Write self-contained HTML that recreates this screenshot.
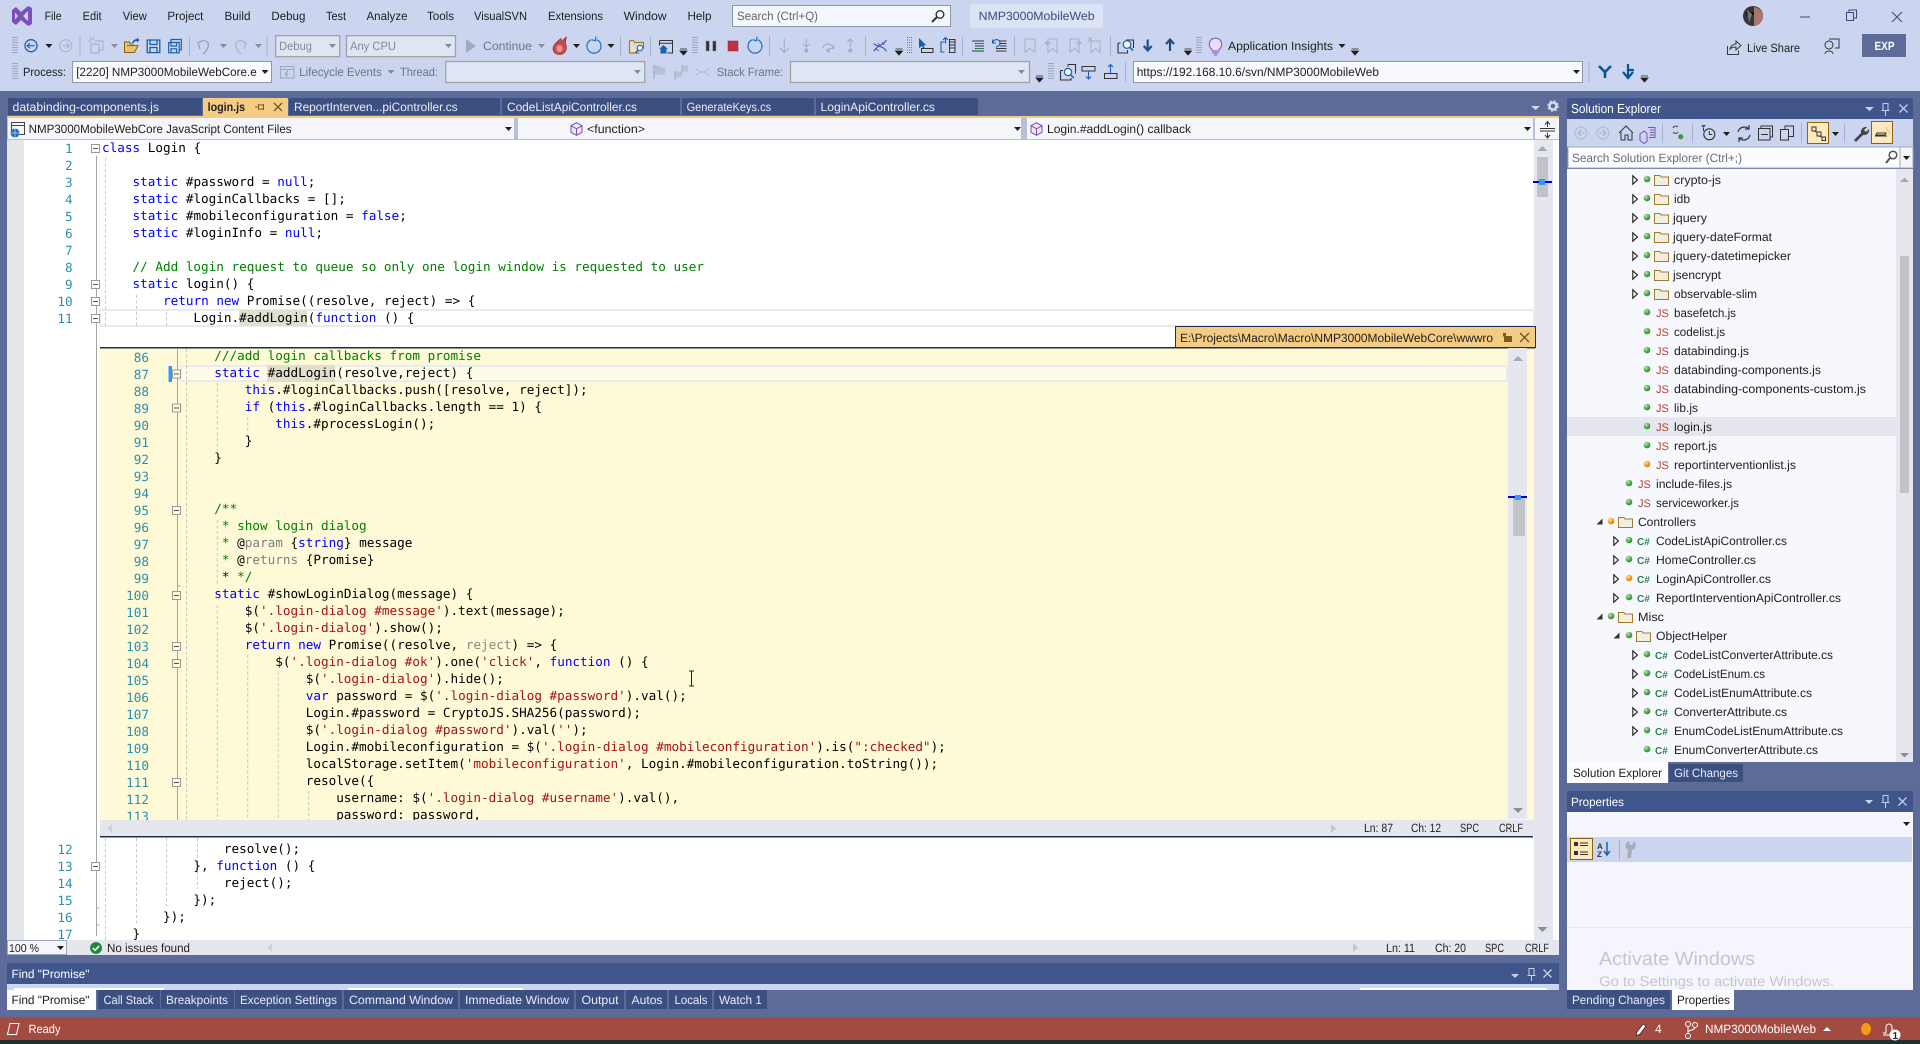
<!DOCTYPE html>
<html><head><meta charset="utf-8"><title>NMP3000MobileWeb</title>
<style>
html,body{margin:0;padding:0;background:#5d6b99;overflow:hidden;width:1920px;height:1044px}
svg{display:block;text-rendering:geometricPrecision}
text{font-family:"Liberation Sans",sans-serif;font-size:12px;fill:#1e1e1e;white-space:pre}
.w{fill:#fff}.gr{fill:#858a99}.lb{fill:#e8ecf8}
.m{font-family:"DejaVu Sans Mono","Liberation Mono",monospace;font-size:12.67px;fill:#000;white-space:pre}
.n{font-family:"DejaVu Sans Mono","Liberation Mono",monospace;font-size:12.67px;fill:#2b91af;text-anchor:end}
.k{fill:#0000ff}.s{fill:#a31515}.c{fill:#008000}.g{fill:#8a8a8a}.h{fill:#808080}.t{fill:#000}
.js{font-size:11px;fill:#b5432b}.cs{font-size:10px;font-weight:bold;fill:#2f7d4f}
</style></head><body>
<svg xmlns="http://www.w3.org/2000/svg" width="1920" height="1044" viewBox="0 0 1920 1044">
<defs>
<radialGradient id="gg" cx=".35" cy=".3" r=".8"><stop offset="0" stop-color="#b5e8a8"/><stop offset=".6" stop-color="#4ca64c"/><stop offset="1" stop-color="#2b7a2b"/></radialGradient>
<radialGradient id="og" cx=".35" cy=".3" r=".8"><stop offset="0" stop-color="#ffe39a"/><stop offset=".6" stop-color="#f09a10"/><stop offset="1" stop-color="#c87400"/></radialGradient>
<symbol id="d" width="8" height="8" overflow="visible"><circle cx="4" cy="4" r="3.3" fill="url(#gg)"/></symbol>
<symbol id="o" width="8" height="8" overflow="visible"><circle cx="4" cy="4" r="3.3" fill="url(#og)"/></symbol>
<symbol id="f" width="15" height="12" overflow="visible"><path d="M.5 1.5h5.5l1 1.5h7.5v8.5H.5z" fill="#f1efe4" stroke="#a07c28"/></symbol>
<symbol id="a" width="7" height="10" overflow="visible"><path d="M.8.8l4.6 4.2L.8 9.2z" fill="#fff" stroke="#1e1e1e" stroke-width="1.100"/></symbol>
<symbol id="e" width="7" height="7" overflow="visible"><path d="M6.500.5v6h-6z" fill="#333"/></symbol>
<symbol id="b" width="9" height="9" overflow="visible"><rect x=".5" y=".5" width="8" height="8" fill="#fff" stroke="#9a9a9a"/><path d="M2 4.500h5" stroke="#555"/></symbol>
<symbol id="by" width="9" height="9" overflow="visible"><rect x=".5" y=".5" width="8" height="8" fill="#fef9d6" stroke="#9a9a9a"/><path d="M2 4.500h5" stroke="#555"/></symbol>
<symbol id="dn" width="7" height="4" overflow="visible"><path d="M0 0h7l-3.500 4z" fill="#1e1e1e"/></symbol>
<symbol id="dg" width="7" height="4" overflow="visible"><path d="M0 0h7l-3.500 4z" fill="#858a99"/></symbol>
<symbol id="ov" width="7" height="6" overflow="visible"><path d="M0 0h7M0 2h7l-3.500 4z" stroke="#1e1e1e" stroke-width=".8" fill="#1e1e1e"/></symbol>
<symbol id="gp" width="6" height="17" overflow="visible"><path d="M1 0v17M3 0v17M5 0v17" stroke="#6b7390" stroke-width="1" stroke-dasharray="1 1.500"/></symbol>
<symbol id="cube" width="13" height="14" overflow="visible"><path d="M6.500.7l5.500 3v6.600l-5.500 3-5.500-3V3.700zM1 3.700l5.500 3 5.500-3M6.500 6.700v6.600" fill="#efe6f6" stroke="#7d4fb0"/></symbol>
<symbol id="xs" width="9" height="9" overflow="visible"><path d="M.5.5l8 8M8.500.5l-8 8" stroke="#c8d0ea" stroke-width="1.300"/></symbol>
<symbol id="pin" width="9" height="13" overflow="visible"><path d="M2 .5h5v7H2zM.5 7.500h8M4.500 7.500v5.500" fill="none" stroke="#c8d0ea"/></symbol>
<clipPath id="pk"><rect x="100" y="348" width="1407" height="472"/></clipPath>
<clipPath id="lo"><rect x="24" y="837" width="1510" height="103"/></clipPath>
<clipPath id="pt"><rect x="1180" y="328" width="313" height="18"/></clipPath>
<clipPath id="pr"><rect x="72" y="61" width="185" height="21"/></clipPath>
</defs>

<rect width="1920" height="1044" fill="#5d6b99"/>
<rect width="1920" height="91" fill="#ccd5f0"/>

<!-- logo + menu -->
<path d="M12 10l4-3 5 5 7-6 4 2v16l-4 2-7-6-5 5-4-3zM15 12.500v7l3-3.500zM28 11l-5 5 5 5z" fill="#7c50b8" fill-rule="evenodd"/>
<text x="44.600" y="20" textLength="17" lengthAdjust="spacingAndGlyphs">File</text>
<text x="82.600" y="20" textLength="19" lengthAdjust="spacingAndGlyphs">Edit</text>
<text x="122.800" y="20" textLength="24" lengthAdjust="spacingAndGlyphs">View</text>
<text x="167.400" y="20" textLength="36" lengthAdjust="spacingAndGlyphs">Project</text>
<text x="224.500" y="20" textLength="26" lengthAdjust="spacingAndGlyphs">Build</text>
<text x="271.400" y="20" textLength="34" lengthAdjust="spacingAndGlyphs">Debug</text>
<text x="326" y="20" textLength="20" lengthAdjust="spacingAndGlyphs">Test</text>
<text x="366.500" y="20" textLength="41" lengthAdjust="spacingAndGlyphs">Analyze</text>
<text x="427" y="20" textLength="27" lengthAdjust="spacingAndGlyphs">Tools</text>
<text x="474" y="20" textLength="53" lengthAdjust="spacingAndGlyphs">VisualSVN</text>
<text x="548" y="20" textLength="55" lengthAdjust="spacingAndGlyphs">Extensions</text>
<text x="623.600" y="20" textLength="43" lengthAdjust="spacingAndGlyphs">Window</text>
<text x="687.500" y="20" textLength="24" lengthAdjust="spacingAndGlyphs">Help</text>

<rect x="732.500" y="5.500" width="218" height="21" fill="#f5f7fe" stroke="#8f96ad"/>
<text x="737" y="20" textLength="81" lengthAdjust="spacingAndGlyphs" style="fill:#666">Search (Ctrl+Q)</text>
<path d="M932 22l5-5" stroke="#333" stroke-width="2"/><circle cx="940" cy="14.500" r="3.800" fill="none" stroke="#333" stroke-width="1.400"/>
<rect x="970" y="4" width="133" height="24" fill="#dde3f7"/>
<text x="978.600" y="20" textLength="116" lengthAdjust="spacingAndGlyphs" style="fill:#3d4a78">NMP3000MobileWeb</text>

<!-- window controls -->
<circle cx="1753" cy="16" r="10" fill="#3a3336"/><path d="M1746 12h14v3h-14z" fill="#111"/><path d="M1754 7a10 10 0 0 1 9 9 10 10 0 0 1-9 10z" fill="#a9776a"/><path d="M1747 10l5 4-3 9z" fill="#6c7a86"/>
<path d="M1800 17h10" stroke="#3d4a78" stroke-width="1"/>
<path d="M1846.500 12.500h7v8h-7zM1849 12.500v-2.500h7.500v8h-3" fill="none" stroke="#3d4a78"/>
<path d="M1892 12l10 10M1902 12l-10 10" stroke="#3d4a78"/>
<path d="M1727.500 46v8.500h11v-4M1730 49c1-4 4-5 6-5v-3l5 4.500-5 4.500v-3c-2 0-4 0-6 2z" fill="none" stroke="#3a3a3a"/>
<text x="1747" y="52" textLength="53" lengthAdjust="spacingAndGlyphs">Live Share</text>
<circle cx="1829" cy="45" r="4" fill="none" stroke="#333"/><path d="M1825 54c0-4 8-4 8 0M1829 39h10v9h-4" fill="none" stroke="#333"/>
<rect x="1862" y="34" width="44" height="23" fill="#5d6b99"/>
<text x="1874.500" y="50" style="fill:#fff;font-weight:bold" textLength="20" lengthAdjust="spacingAndGlyphs">EXP</text>

<!-- toolbar row 1 -->
<use href="#gp" x="12" y="37"/>
<circle cx="31" cy="45.700" r="6" fill="none" stroke="#1e5faa" stroke-width="1.300"/><path d="M34.500 45.700h-7M30 43l-2.800 2.700 2.800 2.700" fill="none" stroke="#1e5faa" stroke-width="1.100"/>
<use href="#dn" x="45.500" y="44"/>
<circle cx="65.700" cy="45.700" r="6" fill="none" stroke="#a9afc2"/><path d="M62 45.700h7M66.500 43l2.800 2.700-2.800 2.700" fill="none" stroke="#a9afc2"/>
<path d="M80 36v20M189.500 36v20M267 36v20M620.500 36v20M650.500 36v20M769.500 36v20M865.500 36v20M962.500 36v20M1014.500 36v20M1110.500 36v20" stroke="#a8b1cc"/>
<path d="M91 44h8v9h-8zM95 41h8v9h-4M90 37l1 3M94 38l-2 2M88 41h3" fill="none" stroke="#a5abc0"/><use href="#dg" x="111" y="44"/>
<path d="M124.500 45v7.500h10l3.500-7h-11M124.500 45v-3h5l1 2h3" fill="#e3c16f" stroke="#8c6410"/><path d="M132 43c1-3 3-4 5-4v-1.500l2.500 2.500-2.500 2.500v-1.500c-2 0-3 1-3.500 2z" fill="#1d62ac"/>
<path d="M147.200 40h12.600v12.600h-12.600zM150 40v4.500h7V40M150 52.600v-5.100h7v5.100" fill="none" stroke="#1a5fa8" stroke-width="1.300"/>
<path d="M168.700 42.500h10.500v10.300h-10.500zM171 42.500v3.500h5.500v-3.500M171 52.800v-4h5.500v4M171 42v-2.500h10.300v10.300h-2" fill="none" stroke="#1a5fa8" stroke-width="1.200"/>
<path d="M200 49l-2-6 4-2c5-2 9 3 4 10l-3 3" fill="none" stroke="#9aa0b5" stroke-width="1.300"/><use href="#dg" x="220" y="44"/>
<path d="M244 49l2-6-4-2c-5-2-9 3-4 10l3 3" fill="none" stroke="#b0b5c6" stroke-width="1.300"/><use href="#dg" x="255" y="44"/>
<rect x="275.700" y="35.700" width="64" height="21" fill="#dfe6f3" stroke="#a0a2a5" stroke-width="1.300"/><text x="279" y="50" class="gr" textLength="33" lengthAdjust="spacingAndGlyphs">Debug</text><use href="#dg" x="329" y="44"/>
<rect x="346.500" y="35.700" width="109" height="21" fill="#dfe6f3" stroke="#a0a2a5" stroke-width="1.300"/><text x="350" y="50" class="gr" textLength="46" lengthAdjust="spacingAndGlyphs">Any CPU</text><use href="#dg" x="445" y="44"/>
<path d="M466 39l10 7-10 7z" fill="#a3a9bc"/>
<text x="483" y="50" style="fill:#6e7386" textLength="49" lengthAdjust="spacingAndGlyphs">Continue</text><use href="#dg" x="538" y="44"/>
<path d="M566.500 37c-3 1.500-3.500 3-3.500 4.500-1.500-1-2-2-2-3-4 3-8 7-8 10 0 4 3 6 6.500 6 4 0 7-3 7-7 0-2-1-3-1-5 0-2 .5-4 1-5.500z" fill="#cc4a4a" stroke="#8d2320" stroke-width=".6"/><ellipse cx="559.500" cy="48.500" rx="3" ry="3.500" fill="#ee9a9a"/><use href="#dn" x="573" y="44"/>
<path d="M591 39.800a7 7 0 1 0 6 0M596 36.500l-.5 4.200-4-1" fill="none" stroke="#1e6fc0" stroke-width="1.200"/><use href="#dn" x="607.500" y="44"/>
<path d="M629.500 40.500v12.500h10M629.500 40.500h4l1 2h9v6" fill="#e8e0c8" stroke="#a07c28" stroke-width="1.200"/><circle cx="640" cy="48" r="2.800" fill="#f4f6fc" stroke="#1d62ac" stroke-width="1.100"/><path d="M638 50l-2.500 2.800" stroke="#1d62ac" stroke-width="1.400"/>
<path d="M659.500 40.500h13v12.500h-5M659.500 43.200h13M659.500 40.500v5" fill="none" stroke="#333"/><path d="M663.500 45l4.300 4h-1.300v4.500h-6V49h-1.300z" fill="#1d62ac"/>
<use href="#ov" x="680" y="49"/><use href="#gp" x="692" y="37"/>
<path d="M706 41h3.300v10H706zM712.700 41h3.300v10h-3.300z" fill="#333" stroke="#8b8f9e" stroke-width=".5"/>
<rect x="728" y="41" width="10" height="10" fill="#c23045" stroke="#8a2a3a" stroke-width=".5"/>
<path d="M752 39.800a7 7 0 1 0 6 0M757 36.500l-.5 4.200-4-1" fill="none" stroke="#1e6fc0" stroke-width="1.200"/>
<path d="M784.300 39v13.500M779.500 47.500l4.800 5 4.800-5" fill="none" stroke="#a8aec2" stroke-width="1.200"/>
<circle cx="806.300" cy="50.500" r="2" fill="#a8aec2"/><path d="M806.300 39v8M803.300 44l3 3 3-3" fill="none" stroke="#a8aec2" stroke-width="1.200"/>
<circle cx="828.300" cy="50.500" r="2" fill="#a8aec2"/><path d="M822.500 48.500c1-6 9-6 11 0M833.500 44.500v4h-4" fill="none" stroke="#a8aec2" stroke-width="1.200"/>
<circle cx="850.300" cy="50.500" r="2" fill="#a8aec2"/><path d="M850.300 47.500v-8.500M847.300 42l3-3 3 3" fill="none" stroke="#a8aec2" stroke-width="1.200"/>
<path d="M873.500 51c3-1 2-4 7-6s4-3 6-5M873.500 44c2 0 3 2 6 2.500s5 1.500 7 5" fill="none" stroke="#2f5fa8" stroke-width="1.200"/><path d="M875 48l4 3M878 43l3 4M882 42l2 3" stroke="#7c50b8"/>
<use href="#ov" x="895.500" y="49"/><use href="#gp" x="906.500" y="37"/>
<path d="M919 38l7 7-2.500.5 1.500 3-1.500.5-1.500-3-3 2z" fill="#1c5ca0"/><rect x="921.500" y="48.500" width="11.500" height="4" fill="none" stroke="#333"/>
<path d="M944.500 42h-3.500v10h3.500M945.500 37.500v6M943 40l2.500-2.500 2.500 2.500" fill="none" stroke="#1c5ca0" stroke-width="1.100"/><path d="M949.500 39.500h5.500v13h-5.500z" fill="none" stroke="#333"/><path d="M950 42h5M950 45h5M950 48h5" stroke="#333"/>
<path d="M972 41h12M975 43.500h9M975 46h9M975 48.500h9M972 51h12" stroke="#333"/><path d="M976 43.500h8M976 48.500h8" stroke="#2c7a4f"/>
<path d="M993 43a3.500 3.500 0 1 1 4 3.500l-1 1M992.500 39.500v3.500h3.500" fill="none" stroke="#1c5ca0" stroke-width="1.100"/><path d="M999 41h7.500M1000 43.500h6.500M1000 46h6.500M996 48.500h10.500M996 51h10.500" stroke="#333"/>
<path d="M1025 39h10v13.500l-5-4-5 4z" fill="none" stroke="#a8aec2"/>
<path d="M1048 39h9v13.500l-4.500-4-4.500 4zM1045 43l3-2.500M1045 43l3 2.500M1045 43h6" fill="none" stroke="#a8aec2"/>
<path d="M1070 39h9v13.500l-4.500-4-4.500 4zM1081 43l-3-2.500M1081 43l-3 2.500M1081 43h-6" fill="none" stroke="#a8aec2"/>
<path d="M1091 41h9v11.500l-4.500-4-4.500 4zM1088 37.500l4 4M1092 37.500l-4 4" fill="none" stroke="#a8aec2"/>
<path d="M1118 43v10h9.500v-3M1118 43h2.500M1126 40h7.500v8" fill="none" stroke="#333" stroke-width="1.100"/><circle cx="1127" cy="44.500" r="3.800" fill="#f4f6fc" stroke="#1d62ac" stroke-width="1.200"/><path d="M1129.800 47.300l3.200 3.200" stroke="#1d62ac" stroke-width="1.600"/>
<path d="M1147.700 39.500v10M1143.700 46l4 4.500 4-4.500" fill="none" stroke="#1c4f8a" stroke-width="2.200"/>
<path d="M1170 51v-11M1166 44l4-4.500 4 4.500" fill="none" stroke="#1c4f8a" stroke-width="2.200"/>
<use href="#ov" x="1184.500" y="49"/><use href="#gp" x="1196" y="37"/>
<path d="M1211.500 49a6.200 6.200 0 1 1 8 0l-1 2h-6zM1212.500 53h6M1214 55h3" fill="#e8def4" stroke="#7c50b8"/>
<text x="1228" y="50" textLength="105" lengthAdjust="spacingAndGlyphs">Application Insights</text>
<use href="#dn" x="1338.500" y="44"/><use href="#ov" x="1351.500" y="49"/>

<!-- toolbar row 2 -->
<use href="#gp" x="12" y="63"/>
<text x="23" y="76" textLength="43" lengthAdjust="spacingAndGlyphs">Process:</text>
<rect x="72.500" y="61.500" width="199" height="21" fill="#f8f9fe" stroke="#8f96ad"/>
<text x="76.300" y="76" clip-path="url(#pr)" textLength="180.400" lengthAdjust="spacingAndGlyphs">[2220] NMP3000MobileWebCore.e</text><use href="#dn" x="261.500" y="70"/>
<path d="M280.500 66.500h13.500v11.500h-13.500zM280.500 69.500h13.500" fill="none" stroke="#a1a7bb"/><path d="M288 70.500l-3 3.500h2.500l-1.500 3" fill="none" stroke="#9aa0b5"/>
<text x="299.300" y="76" style="fill:#6e7386" textLength="82.500" lengthAdjust="spacingAndGlyphs">Lifecycle Events</text><use href="#dg" x="387.500" y="70"/>
<text x="400" y="76" style="fill:#6e7386" textLength="38" lengthAdjust="spacingAndGlyphs">Thread:</text>
<rect x="445.700" y="61.500" width="199" height="21" fill="#dfe6f3" stroke="#a0a2a5" stroke-width="1.300"/><use href="#dg" x="634" y="70"/>
<path d="M654 65v14" stroke="#a8aec2" stroke-width="1.300"/><path d="M654.500 65.500h5v2h5.500v7h-10.500z" fill="#b9bfd4"/>
<path d="M675 71v9M682 65v8" stroke="#a8aec2" stroke-width="1.200"/><path d="M675.500 71.500h6v6h-6zM682.500 65.500h5.500v6h-5.500z" fill="#b9bfd4"/>
<path d="M696 69l5 3 3 0 5-3M696 75l5-3M709 75l-5-3" fill="none" stroke="#b0b6ca"/>
<text x="716.700" y="76" style="fill:#6e7386" textLength="66.600" lengthAdjust="spacingAndGlyphs">Stack Frame:</text>
<rect x="790.500" y="61.500" width="239" height="21" fill="#dfe6f3" stroke="#a0a2a5" stroke-width="1.300"/><use href="#dg" x="1018" y="70"/>
<use href="#ov" x="1036" y="76"/><use href="#gp" x="1048" y="63"/>
<path d="M1060.500 70.500v9.500h10.500v-2M1060.500 70.500h2.500M1068 64.500h7.500v9M1068 64.500v2" fill="none" stroke="#333" stroke-width="1.100"/><circle cx="1068" cy="72" r="3.600" fill="#f4f6fc" stroke="#1d62ac" stroke-width="1.200"/><path d="M1070.800 75l3 3" stroke="#1d62ac" stroke-width="1.500"/>
<path d="M1082 66.500h13v4.500h-13z" fill="none" stroke="#333"/><path d="M1088.500 71v8M1086 76.500l2.500 2.500 2.500-2.500" fill="none" stroke="#1d62ac" stroke-width="1.100"/>
<path d="M1104.500 73.500h12.500v5h-12.500z" fill="none" stroke="#333"/><path d="M1110.500 73v-8.500M1108 67l2.500-2.500 2.500 2.500" fill="none" stroke="#1d62ac" stroke-width="1.100"/>
<path d="M1125.500 62v20" stroke="#a8b1cc"/>
<rect x="1133.500" y="61.500" width="449" height="21" fill="#f8f9fe" stroke="#8f96ad"/>
<text x="1136.700" y="76" textLength="242.300" lengthAdjust="spacingAndGlyphs">https://192.168.10.6/svn/NMP3000MobileWeb</text><use href="#dn" x="1573" y="70"/>
<path d="M1589 62v20" stroke="#a8b1cc"/>
<path d="M1599 66l6 6 6-6M1605 72v6" fill="none" stroke="#0a5596" stroke-width="2.600"/>
<path d="M1628 64v13M1623 72l5 6 5-6M1628 70h6" fill="none" stroke="#0a5596" stroke-width="2.200"/>
<use href="#ov" x="1641" y="76"/>

<!-- document tabs -->
<rect x="8" y="98" width="194" height="17" fill="#3b4f81"/>
<rect x="203" y="98" width="85" height="18" fill="#f5cc84"/>
<rect x="289" y="98" width="211" height="17" fill="#3b4f81"/>
<rect x="502" y="98" width="178" height="17" fill="#3b4f81"/>
<rect x="682" y="98" width="132" height="17" fill="#3b4f81"/>
<rect x="816" y="98" width="162" height="17" fill="#3b4f81"/>
<text x="12.500" y="111" class="lb" textLength="146.500" lengthAdjust="spacingAndGlyphs">databinding-components.js</text>
<text x="207.600" y="111" style="font-weight:bold;fill:#222" textLength="37.500" lengthAdjust="spacingAndGlyphs">login.js</text>
<path d="M255 107h3M258.500 104v6M258.500 105h5v4h-5M263.500 104v6" fill="none" stroke="#7b5a1c"/>
<path d="M274 103l8 8M282 103l-8 8" stroke="#5e4820" stroke-width="1.200"/>
<text x="294" y="111" class="lb" textLength="163.600" lengthAdjust="spacingAndGlyphs">ReportInterven...piController.cs</text>
<text x="507" y="111" class="lb" textLength="130" lengthAdjust="spacingAndGlyphs">CodeListApiController.cs</text>
<text x="686.600" y="111" class="lb" textLength="84.500" lengthAdjust="spacingAndGlyphs">GenerateKeys.cs</text>
<text x="820.500" y="111" class="lb" textLength="114.500" lengthAdjust="spacingAndGlyphs">LoginApiController.cs</text>
<path d="M1531 106h9l-4.500 4z" fill="#d4daf0"/>
<circle cx="1553" cy="106" r="3.500" fill="none" stroke="#d4daf0" stroke-width="2.400"/><circle cx="1553" cy="106" r="5" fill="none" stroke="#d4daf0" stroke-width="1.500" stroke-dasharray="2 2"/>
<rect x="7" y="116" width="1552" height="2" fill="#f5cc84"/>

<!-- nav bar -->
<rect x="7" y="118" width="1552" height="22" fill="#b6bed8"/>
<rect x="8" y="118" width="506" height="21" fill="#f5f6fb"/>
<rect x="518" y="118" width="503" height="21" fill="#f5f6fb"/>
<rect x="1027" y="118" width="506" height="21" fill="#f5f6fb"/>
<rect x="1535" y="118" width="24" height="21" fill="#f5f6fb"/>
<path d="M11.500 122.500h13v3h-13zM11.500 125.500v6M24.500 125.500v9h-5" fill="none" stroke="#444"/><circle cx="15" cy="133" r="4.500" fill="#1f6bbf"/><path d="M10.500 133h9M15 128.500v9" stroke="#bcd8f5" stroke-width=".7"/>
<text x="28.600" y="133" textLength="263" lengthAdjust="spacingAndGlyphs">NMP3000MobileWebCore JavaScript Content Files</text>
<use href="#dn" x="505" y="127"/>
<use href="#cube" x="570" y="122"/>
<text x="587" y="133" textLength="58" lengthAdjust="spacingAndGlyphs">&lt;function&gt;</text>
<use href="#dn" x="1014" y="127"/>
<use href="#cube" x="1030" y="122"/>
<text x="1047" y="133" textLength="144" lengthAdjust="spacingAndGlyphs">Login.#addLogin() callback</text>
<use href="#dn" x="1524" y="127"/>
<path d="M1540 128.500h15M1540 131h15M1547.500 122v5M1545 124.500l2.500-3 2.500 3M1547.500 132.500v5M1545 135l2.500 3 2.500-3" fill="none" stroke="#333"/>

<!-- editor area -->
<rect x="7" y="140" width="17" height="800" fill="#e6e7e8"/>
<rect x="24" y="140" width="1510" height="800" fill="#fff"/>
<rect x="1534" y="140" width="19" height="800" fill="#e6e7ee"/>
<rect x="1553" y="140" width="6" height="800" fill="#fff"/>
<path d="M1537.500 151l5-5 5 5z" fill="#a5a9b5"/>
<rect x="1537" y="157" width="11" height="40" fill="#c2c3c9"/>
<rect x="1533" y="181" width="19" height="2" fill="#0000d0"/><rect x="1539" y="179" width="6" height="6" fill="#3399ff"/>
<path d="M1537.500 927l5 5 5-5z" fill="#8a8d99"/>

<rect x="100" y="310" width="1434" height="16" fill="#fff" stroke="#eaeaf2" stroke-width="2"/>
<path d="M96.500 156v780M96.500 908h3M96.500 925h3" stroke="#a5a5a5" fill="none"/>
<g stroke="#c8c8c8" stroke-dasharray="3 2.500"><path d="M105.500 158v168M136.500 295v31M166.500 312v14"/><path d="M105.500 838v102M136.500 838v85M166.500 838v68M197.500 838v51"/></g>

<text class="n" x="72.600" y="153">1</text><text class="n" x="72.600" y="170">2</text><text class="n" x="72.600" y="187">3</text><text class="n" x="72.600" y="204">4</text><text class="n" x="72.600" y="221">5</text><text class="n" x="72.600" y="238">6</text><text class="n" x="72.600" y="255">7</text><text class="n" x="72.600" y="272">8</text><text class="n" x="72.600" y="289">9</text><text class="n" x="72.600" y="306">10</text><text class="n" x="72.600" y="323">11</text>
<use href="#b" x="91" y="144"/><use href="#b" x="91" y="280"/><use href="#b" x="91" y="297"/><use href="#b" x="91" y="314"/>
<rect x="239" y="310" width="68" height="16" fill="#dfe1d2"/>

<text class="m" x="102" y="152"><tspan class="k">class</tspan> <tspan fill="#000">Login</tspan> {</text>
<text class="m" x="102" y="186">    <tspan class="k">static</tspan> #password = <tspan class="k">null</tspan>;</text>
<text class="m" x="102" y="203">    <tspan class="k">static</tspan> #loginCallbacks = [];</text>
<text class="m" x="102" y="220">    <tspan class="k">static</tspan> #mobileconfiguration = <tspan class="k">false</tspan>;</text>
<text class="m" x="102" y="237">    <tspan class="k">static</tspan> #loginInfo = <tspan class="k">null</tspan>;</text>
<text class="m c" x="102" y="271">    // Add login request to queue so only one login window is requested to user</text>
<text class="m" x="102" y="288">    <tspan class="k">static</tspan> login() {</text>
<text class="m" x="102" y="305">        <tspan class="k">return</tspan> <tspan class="k">new</tspan> Promise((resolve, reject) =&gt; {</text>
<text class="m" x="102" y="322">            Login.#addLogin(<tspan class="k">function</tspan> () {</text>

<!-- peek -->
<rect x="1175.500" y="326.500" width="360" height="21" fill="#f5cc84" stroke="#1f2d50"/>
<text x="1180" y="342" clip-path="url(#pt)" textLength="323" lengthAdjust="spacingAndGlyphs">E:\Projects\Macro\Macro\NMP3000MobileWebCore\wwwroot</text>
<path d="M1503 333h3v3h6v6h-8v-5l-1-1z" fill="#7d5a1e"/>
<path d="M1520 333l9 9M1529 333l-9 9" stroke="#6e5020" stroke-width="1.300"/>
<rect x="100" y="347" width="1434" height="473" fill="#fef9d6"/>
<rect x="100" y="347" width="1435" height="1.500" fill="#1f2d50"/>
<rect x="181" y="366" width="1326" height="15" fill="#fefbe8" stroke="#eaeaf2" stroke-width="2"/>
<rect x="267" y="365" width="68" height="17" fill="#e0dfcc"/>
<rect x="168.500" y="366" width="3.500" height="16" fill="#3399ff"/>
<path d="M177.500 349v471M177.500 586h3" stroke="#a5a5a5" fill="none"/>
<g stroke="#c9c7b2" stroke-dasharray="3 2.500"><path d="M186.500 349v471M217.300 383v68M217.300 520v66M217.300 605v215M247.700 417v17M247.700 655v165M278.300 672v148M308.700 791v29"/></g>
<g clip-path="url(#pk)">
<text class="n" x="149" y="362">86</text><text class="n" x="149" y="379">87</text><text class="n" x="149" y="396">88</text><text class="n" x="149" y="413">89</text><text class="n" x="149" y="430">90</text><text class="n" x="149" y="447">91</text><text class="n" x="149" y="464">92</text><text class="n" x="149" y="481">93</text><text class="n" x="149" y="498">94</text><text class="n" x="149" y="515">95</text><text class="n" x="149" y="532">96</text><text class="n" x="149" y="549">97</text><text class="n" x="149" y="566">98</text><text class="n" x="149" y="583">99</text><text class="n" x="149" y="600">100</text><text class="n" x="149" y="617">101</text><text class="n" x="149" y="634">102</text><text class="n" x="149" y="651">103</text><text class="n" x="149" y="668">104</text><text class="n" x="149" y="685">105</text><text class="n" x="149" y="702">106</text><text class="n" x="149" y="719">107</text><text class="n" x="149" y="736">108</text><text class="n" x="149" y="753">109</text><text class="n" x="149" y="770">110</text><text class="n" x="149" y="787">111</text><text class="n" x="149" y="804">112</text><text class="n" x="149" y="821">113</text>
<use href="#by" x="172" y="369.500"/><use href="#by" x="172" y="403.500"/><use href="#by" x="172" y="506"/><use href="#by" x="172" y="591"/><use href="#by" x="172" y="642"/><use href="#by" x="172" y="659"/><use href="#by" x="172" y="778"/>
<text class="m c" x="183.800" y="360">    ///add login callbacks from promise</text>
<text class="m" x="183.800" y="377">    <tspan class="k">static</tspan> #addLogin(resolve,reject) {</text>
<text class="m" x="183.800" y="394">        <tspan class="k">this</tspan>.#loginCallbacks.push([resolve, reject]);</text>
<text class="m" x="183.800" y="411">        <tspan class="k">if</tspan> (<tspan class="k">this</tspan>.#loginCallbacks.length == 1) {</text>
<text class="m" x="183.800" y="428">            <tspan class="k">this</tspan>.#processLogin();</text>
<text class="m" x="183.800" y="445">        }</text>
<text class="m" x="183.800" y="462">    }</text>
<text class="m c" x="183.800" y="513">    /**</text>
<text class="m c" x="183.800" y="530">     * show login dialog</text>
<text class="m c" x="183.800" y="547">     * <tspan class="t">@</tspan><tspan class="h">param</tspan> <tspan class="t">{</tspan><tspan class="k">string</tspan><tspan class="t">} message</tspan></text>
<text class="m c" x="183.800" y="564">     * <tspan class="t">@</tspan><tspan class="h">returns</tspan> <tspan class="t">{Promise}</tspan></text>
<text class="m c" x="183.800" y="581">     <tspan class="t">*</tspan> */</text>
<text class="m" x="183.800" y="598">    <tspan class="k">static</tspan> #showLoginDialog(message) {</text>
<text class="m" x="183.800" y="615">        $(<tspan class="s">'.login-dialog #message'</tspan>).text(message);</text>
<text class="m" x="183.800" y="632">        $(<tspan class="s">'.login-dialog'</tspan>).show();</text>
<text class="m" x="183.800" y="649">        <tspan class="k">return</tspan> <tspan class="k">new</tspan> Promise((resolve, <tspan class="g">reject</tspan>) =&gt; {</text>
<text class="m" x="183.800" y="666">            $(<tspan class="s">'.login-dialog #ok'</tspan>).one(<tspan class="s">'click'</tspan>, <tspan class="k">function</tspan> () {</text>
<text class="m" x="183.800" y="683">                $(<tspan class="s">'.login-dialog'</tspan>).hide();</text>
<text class="m" x="183.800" y="700">                <tspan class="k">var</tspan> password = $(<tspan class="s">'.login-dialog #password'</tspan>).val();</text>
<text class="m" x="183.800" y="717">                Login.#password = CryptoJS.SHA256(password);</text>
<text class="m" x="183.800" y="734">                $(<tspan class="s">'.login-dialog #password'</tspan>).val(<tspan class="s">''</tspan>);</text>
<text class="m" x="183.800" y="751">                Login.#mobileconfiguration = $(<tspan class="s">'.login-dialog #mobileconfiguration'</tspan>).is(<tspan class="s">":checked"</tspan>);</text>
<text class="m" x="183.800" y="768">                localStorage.setItem(<tspan class="s">'mobileconfiguration'</tspan>, Login.#mobileconfiguration.toString());</text>
<text class="m" x="183.800" y="785">                resolve({</text>
<text class="m" x="183.800" y="802">                    username: $(<tspan class="s">'.login-dialog #username'</tspan>).val(),</text>
<text class="m" x="183.800" y="819">                    password: password,</text>
</g>
<!-- peek scrollbar -->
<rect x="1508" y="348" width="19" height="471" fill="#e6e7ee"/>
<path d="M1513 361l5-5 5 5z" fill="#a5a9b5"/>
<rect x="1513" y="496" width="12" height="40" fill="#c2c3c9"/>
<rect x="1508" y="496" width="19" height="2" fill="#0000d0"/><rect x="1515" y="495" width="6" height="5" fill="#3399ff"/>
<path d="M1513 808l5 5 5-5z" fill="#8a8d99"/>
<rect x="100" y="820" width="1434" height="16" fill="#e6e7ee"/>
<path d="M112 824l-5 4.500 5 4.500z" fill="#d0d1d8"/><path d="M1331 824l5 4.500-5 4.500z" fill="#c4c5cd"/>
<text x="1364" y="832" textLength="29" lengthAdjust="spacingAndGlyphs">Ln: 87</text><text x="1411" y="832" textLength="30" lengthAdjust="spacingAndGlyphs">Ch: 12</text><text x="1460" y="832" textLength="19" lengthAdjust="spacingAndGlyphs">SPC</text><text x="1499" y="832" textLength="24" lengthAdjust="spacingAndGlyphs">CRLF</text>
<rect x="100" y="836" width="1433" height="1.500" fill="#1f2d50"/>

<g clip-path="url(#lo)">
<text class="n" x="72.600" y="854">12</text><text class="n" x="72.600" y="871">13</text><text class="n" x="72.600" y="888">14</text><text class="n" x="72.600" y="905">15</text><text class="n" x="72.600" y="922">16</text><text class="n" x="72.600" y="939">17</text>
<use href="#b" x="91" y="862"/>
<text class="m" x="102" y="853">                resolve();</text>
<text class="m" x="102" y="870">            }, <tspan class="k">function</tspan> () {</text>
<text class="m" x="102" y="887">                reject();</text>
<text class="m" x="102" y="904">            });</text>
<text class="m" x="102" y="921">        });</text>
<text class="m" x="102" y="938">    }</text>
</g>

<!-- editor status -->
<rect x="7" y="940" width="1552" height="15" fill="#e6e7ee"/>
<rect x="7.500" y="940.500" width="59" height="14" fill="#f5f6fb" stroke="#a1a8bd"/>
<text x="9" y="952" style="font-size:11.500px" textLength="30" lengthAdjust="spacingAndGlyphs">100 %</text><use href="#dn" x="57" y="946"/>
<circle cx="96" cy="948" r="6" fill="#1e8a3b"/><path d="M92.800 948l2.300 2.300 4-4.300" fill="none" stroke="#fff" stroke-width="1.500"/>
<text x="107" y="952" textLength="83" lengthAdjust="spacingAndGlyphs">No issues found</text>
<path d="M272 943l-5 4.500 5 4.500z" fill="#d0d1d8"/><path d="M1353 943l5 4.500-5 4.500z" fill="#c4c5cd"/>
<text x="1386" y="952" textLength="29" lengthAdjust="spacingAndGlyphs">Ln: 11</text><text x="1435" y="952" textLength="31" lengthAdjust="spacingAndGlyphs">Ch: 20</text><text x="1485" y="952" textLength="19" lengthAdjust="spacingAndGlyphs">SPC</text><text x="1525" y="952" textLength="24" lengthAdjust="spacingAndGlyphs">CRLF</text>

<!-- find panel -->
<rect x="7" y="963" width="1552" height="21" fill="#3f558c"/>
<text x="11.500" y="978" class="w" textLength="78" lengthAdjust="spacingAndGlyphs">Find "Promise"</text>
<path d="M1511 974h8l-4 4z" fill="#c8d0ea"/><use href="#pin" x="1527" y="968"/><use href="#xs" x="1543" y="969"/>
<rect x="7" y="984" width="1552" height="6" fill="#ccd5f0"/>
<rect x="14" y="988" width="150" height="2" fill="#fff"/><rect x="348" y="988" width="175" height="2" fill="#fff"/><rect x="1360" y="988" width="187" height="2" fill="#fff"/>
<rect x="7" y="990" width="89" height="20" fill="#fdfdff"/>
<text x="11.500" y="1004" textLength="78" lengthAdjust="spacingAndGlyphs">Find "Promise"</text>
<rect x="98" y="990" width="62" height="19" fill="#3b4f81"/><text x="103.500" y="1004" class="lb" textLength="50" lengthAdjust="spacingAndGlyphs">Call Stack</text>
<rect x="161" y="990" width="73" height="19" fill="#3b4f81"/><text x="166" y="1004" class="lb" textLength="62" lengthAdjust="spacingAndGlyphs">Breakpoints</text>
<rect x="235" y="990" width="107" height="19" fill="#3b4f81"/><text x="240" y="1004" class="lb" textLength="97" lengthAdjust="spacingAndGlyphs">Exception Settings</text>
<rect x="344" y="990" width="114" height="19" fill="#3b4f81"/><text x="349" y="1004" class="lb" textLength="104" lengthAdjust="spacingAndGlyphs">Command Window</text>
<rect x="460" y="990" width="114" height="19" fill="#3b4f81"/><text x="465" y="1004" class="lb" textLength="104" lengthAdjust="spacingAndGlyphs">Immediate Window</text>
<rect x="576" y="990" width="48" height="19" fill="#3b4f81"/><text x="581.500" y="1004" class="lb" textLength="37" lengthAdjust="spacingAndGlyphs">Output</text>
<rect x="626" y="990" width="41" height="19" fill="#3b4f81"/><text x="631.500" y="1004" class="lb" textLength="31" lengthAdjust="spacingAndGlyphs">Autos</text>
<rect x="669" y="990" width="43" height="19" fill="#3b4f81"/><text x="674.500" y="1004" class="lb" textLength="33" lengthAdjust="spacingAndGlyphs">Locals</text>
<rect x="714" y="990" width="53" height="19" fill="#3b4f81"/><text x="719" y="1004" class="lb" textLength="43" lengthAdjust="spacingAndGlyphs">Watch 1</text>

<!-- Solution explorer -->
<rect x="1567" y="98" width="346" height="21" fill="#3f558c"/>
<text x="1571" y="113" class="w" style="font-size:13px" textLength="90" lengthAdjust="spacingAndGlyphs">Solution Explorer</text>
<path d="M1865 107h9l-4.500 4z" fill="#c8d0ea"/><use href="#pin" x="1881" y="103"/><use href="#xs" x="1899" y="104"/>
<rect x="1567" y="119" width="346" height="28" fill="#ccd5f0"/>
<circle cx="1581" cy="133" r="6" fill="none" stroke="#b0b6c8"/><path d="M1585 133h-7M1581 130l-3 3 3 3" fill="none" stroke="#b0b6c8"/>
<circle cx="1603" cy="133" r="6" fill="none" stroke="#b0b6c8"/><path d="M1599 133h7M1603 130l3 3-3 3" fill="none" stroke="#b0b6c8"/>
<path d="M1619 133l7-7 7 7M1621 132v8h4v-5h3v5h4v-8" fill="none" stroke="#333"/>
<path d="M1640 134l4-3 3 2.500v8l-3 2-4-3zM1648 127.500h7v10h-6M1650 130h4M1650 132.500h4M1650 135h4" fill="none" stroke="#7c50b8"/>
<path d="M1662.500 123v20M1692.500 123v20M1801.500 123v20M1844.500 123v20" stroke="#a8b1cc"/>
<path d="M1673 128a3 3 0 0 1 5-1M1678 132a3 3 0 0 1-5 0" fill="none" stroke="#444"/><circle cx="1680.700" cy="136.700" r="2.600" fill="#3a9a3a"/>
<path d="M1701 125h5l-2.500 3z" fill="#1c5ca0"/><path d="M1703.500 128v3" stroke="#333"/><circle cx="1709.300" cy="134.300" r="5.500" fill="none" stroke="#333" stroke-width="1.100"/><path d="M1709.300 131v3.500h3" fill="none" stroke="#333"/>
<use href="#dn" x="1723" y="132"/>
<path d="M1738 132a6.500 6.500 0 0 1 11-3M1749 125v4h-4M1750 135a6.500 6.500 0 0 1-11 3M1739 142v-4h4" fill="none" stroke="#333" stroke-width="1.200"/>
<path d="M1758.500 128.500h11.500v11.500h-11.500zM1761 128v-2h11.500v11h-2.500M1761 134.500h7" fill="none" stroke="#333"/>
<path d="M1780.500 129.500h8v10.500h-8zM1785 129v-3h8.500v10.500h-4.500" fill="none" stroke="#333"/>
<rect x="1807.500" y="122.500" width="21" height="21" fill="#fde9bd" stroke="#8c6410"/>
<path d="M1812 127h4v4h-4zM1817 132h4v4h-4zM1822 137h3.500v3.500h-3.500zM1814 131l3 1M1819 136l3 1" fill="none" stroke="#333"/>
<use href="#dn" x="1832" y="132"/>
<path d="M1854 140l7-7a5 5 0 0 1 6-6l-3 3 2 2 3-3a5 5 0 0 1-6 6l-7 7z" fill="#444"/>
<rect x="1871.500" y="121.500" width="21" height="22" fill="#fde9bd" stroke="#8c6410"/>
<path d="M1876 135h9l1-2h-9zM1875 136h12" fill="none" stroke="#333"/><path d="M1888 130v1M1886 128h1M1889 133h1" stroke="#b07a10"/>
<rect x="1568" y="147" width="345" height="21" fill="#fcfcff" stroke="#a1a8bd"/>
<rect x="1900" y="147" width="13" height="21" fill="#f5f6fb" stroke="#a1a8bd"/>
<text x="1572" y="162" style="fill:#6a6d78" textLength="170" lengthAdjust="spacingAndGlyphs">Search Solution Explorer (Ctrl+;)</text>
<circle cx="1893" cy="155" r="3.800" fill="none" stroke="#555" stroke-width="1.500"/><path d="M1890 158l-4 5" stroke="#555" stroke-width="2"/>
<use href="#dn" x="1903" y="156"/>

<rect x="1567" y="169" width="346" height="593" fill="#f7f8fe"/>
<rect x="1896" y="169" width="17" height="593" fill="#e6e7ee"/>
<path d="M1900 182l4.500-4.500 4.500 4.500z" fill="#a5a9b5"/>
<rect x="1900" y="256" width="9" height="237" fill="#c2c3c9"/>
<path d="M1900 753l4.500 4.500 4.500-4.500z" fill="#8a8d99"/>
<rect x="1567" y="417" width="329" height="19" fill="#e6e7ee"/>

<!-- tree rows -->
<g>
<use href="#a" x="1632" y="175"/><use href="#d" x="1643" y="175"/><use href="#f" x="1654" y="174"/><text x="1674" y="184" textLength="47" lengthAdjust="spacingAndGlyphs">crypto-js</text>
<use href="#a" x="1632" y="194"/><use href="#d" x="1643" y="194"/><use href="#f" x="1654" y="193"/><text x="1674" y="203" textLength="16" lengthAdjust="spacingAndGlyphs">idb</text>
<use href="#a" x="1632" y="213"/><use href="#d" x="1643" y="213"/><use href="#f" x="1654" y="212"/><text x="1673" y="222" textLength="34" lengthAdjust="spacingAndGlyphs">jquery</text>
<use href="#a" x="1632" y="232"/><use href="#d" x="1643" y="232"/><use href="#f" x="1654" y="231"/><text x="1673" y="241" textLength="99" lengthAdjust="spacingAndGlyphs">jquery-dateFormat</text>
<use href="#a" x="1632" y="251"/><use href="#d" x="1643" y="251"/><use href="#f" x="1654" y="250"/><text x="1673" y="260" textLength="118" lengthAdjust="spacingAndGlyphs">jquery-datetimepicker</text>
<use href="#a" x="1632" y="270"/><use href="#d" x="1643" y="270"/><use href="#f" x="1654" y="269"/><text x="1673" y="279" textLength="48" lengthAdjust="spacingAndGlyphs">jsencrypt</text>
<use href="#a" x="1632" y="289"/><use href="#d" x="1643" y="289"/><use href="#f" x="1654" y="288"/><text x="1674" y="298" textLength="83" lengthAdjust="spacingAndGlyphs">observable-slim</text>
<use href="#d" x="1643" y="308"/><text x="1656" y="317" class="js">JS</text><text x="1674" y="317" textLength="62" lengthAdjust="spacingAndGlyphs">basefetch.js</text>
<use href="#d" x="1643" y="327"/><text x="1656" y="336" class="js">JS</text><text x="1674" y="336" textLength="51" lengthAdjust="spacingAndGlyphs">codelist.js</text>
<use href="#d" x="1643" y="346"/><text x="1656" y="355" class="js">JS</text><text x="1674" y="355" textLength="75" lengthAdjust="spacingAndGlyphs">databinding.js</text>
<use href="#d" x="1643" y="365"/><text x="1656" y="374" class="js">JS</text><text x="1674" y="374" textLength="147" lengthAdjust="spacingAndGlyphs">databinding-components.js</text>
<use href="#d" x="1643" y="384"/><text x="1656" y="393" class="js">JS</text><text x="1674" y="393" textLength="192" lengthAdjust="spacingAndGlyphs">databinding-components-custom.js</text>
<use href="#d" x="1643" y="403"/><text x="1656" y="412" class="js">JS</text><text x="1674" y="412" textLength="24" lengthAdjust="spacingAndGlyphs">lib.js</text>
<use href="#d" x="1643" y="422"/><text x="1656" y="431" class="js">JS</text><text x="1674" y="431" textLength="38" lengthAdjust="spacingAndGlyphs">login.js</text>
<use href="#d" x="1643" y="441"/><text x="1656" y="450" class="js">JS</text><text x="1674" y="450" textLength="43" lengthAdjust="spacingAndGlyphs">report.js</text>
<use href="#o" x="1643" y="460"/><text x="1656" y="469" class="js">JS</text><text x="1674" y="469" textLength="122" lengthAdjust="spacingAndGlyphs">reportinterventionlist.js</text>
<use href="#d" x="1625" y="479"/><text x="1638" y="488" class="js">JS</text><text x="1656" y="488" textLength="76" lengthAdjust="spacingAndGlyphs">include-files.js</text>
<use href="#d" x="1625" y="498"/><text x="1638" y="507" class="js">JS</text><text x="1656" y="507" textLength="83" lengthAdjust="spacingAndGlyphs">serviceworker.js</text>
<use href="#e" x="1596" y="518"/><use href="#o" x="1607" y="517"/><use href="#f" x="1618" y="516"/><text x="1638" y="526" textLength="58" lengthAdjust="spacingAndGlyphs">Controllers</text>
<use href="#a" x="1613" y="536"/><use href="#d" x="1625" y="536"/><text x="1637" y="545" class="cs">C#</text><text x="1656" y="545" textLength="131" lengthAdjust="spacingAndGlyphs">CodeListApiController.cs</text>
<use href="#a" x="1613" y="555"/><use href="#d" x="1625" y="555"/><text x="1637" y="564" class="cs">C#</text><text x="1656" y="564" textLength="100" lengthAdjust="spacingAndGlyphs">HomeController.cs</text>
<use href="#a" x="1613" y="574"/><use href="#o" x="1625" y="574"/><text x="1637" y="583" class="cs">C#</text><text x="1656" y="583" textLength="115" lengthAdjust="spacingAndGlyphs">LoginApiController.cs</text>
<use href="#a" x="1613" y="593"/><use href="#d" x="1625" y="593"/><text x="1637" y="602" class="cs">C#</text><text x="1656" y="602" textLength="185" lengthAdjust="spacingAndGlyphs">ReportInterventionApiController.cs</text>
<use href="#e" x="1596" y="613"/><use href="#d" x="1607" y="612"/><use href="#f" x="1618" y="611"/><text x="1638" y="621" textLength="26" lengthAdjust="spacingAndGlyphs">Misc</text>
<use href="#e" x="1613" y="632"/><use href="#d" x="1625" y="631"/><use href="#f" x="1636" y="630"/><text x="1656" y="640" textLength="71" lengthAdjust="spacingAndGlyphs">ObjectHelper</text>
<use href="#a" x="1632" y="650"/><use href="#d" x="1643" y="650"/><text x="1655" y="659" class="cs">C#</text><text x="1674" y="659" textLength="159" lengthAdjust="spacingAndGlyphs">CodeListConverterAttribute.cs</text>
<use href="#a" x="1632" y="669"/><use href="#d" x="1643" y="669"/><text x="1655" y="678" class="cs">C#</text><text x="1674" y="678" textLength="91" lengthAdjust="spacingAndGlyphs">CodeListEnum.cs</text>
<use href="#a" x="1632" y="688"/><use href="#d" x="1643" y="688"/><text x="1655" y="697" class="cs">C#</text><text x="1674" y="697" textLength="138" lengthAdjust="spacingAndGlyphs">CodeListEnumAttribute.cs</text>
<use href="#a" x="1632" y="707"/><use href="#d" x="1643" y="707"/><text x="1655" y="716" class="cs">C#</text><text x="1674" y="716" textLength="113" lengthAdjust="spacingAndGlyphs">ConverterAttribute.cs</text>
<use href="#a" x="1632" y="726"/><use href="#d" x="1643" y="726"/><text x="1655" y="735" class="cs">C#</text><text x="1674" y="735" textLength="169" lengthAdjust="spacingAndGlyphs">EnumCodeListEnumAttribute.cs</text>
<use href="#d" x="1643" y="745"/><text x="1655" y="754" class="cs">C#</text><text x="1674" y="754" textLength="144" lengthAdjust="spacingAndGlyphs">EnumConverterAttribute.cs</text>
</g>

<!-- explorer tabs -->
<rect x="1567" y="762" width="101" height="21" fill="#fdfdff"/>
<text x="1573" y="777" textLength="89" lengthAdjust="spacingAndGlyphs">Solution Explorer</text>
<rect x="1669" y="764" width="74" height="18" fill="#3b4f81"/>
<text x="1674" y="777" class="lb" textLength="64" lengthAdjust="spacingAndGlyphs">Git Changes</text>

<!-- properties -->
<rect x="1567" y="791" width="346" height="21" fill="#3f558c"/>
<text x="1571" y="806" class="w" textLength="53" lengthAdjust="spacingAndGlyphs">Properties</text>
<path d="M1865 800h8l-4 4z" fill="#c8d0ea"/><use href="#pin" x="1881" y="795"/><use href="#xs" x="1898" y="797"/>
<rect x="1567" y="812" width="346" height="178" fill="#f5f6fd"/>
<use href="#dn" x="1903" y="822"/>
<rect x="1567" y="837" width="345" height="25" fill="#ccd5f0"/>
<rect x="1570.500" y="838.500" width="22" height="21" fill="#fde9bd" stroke="#8c6410"/>
<path d="M1574 842h4v4h-4zM1574 851h4v4h-4z" fill="#333"/><path d="M1580 843h8M1580 845.500h8M1580 852h8M1580 854.500h8" fill="none" stroke="#333"/>
<text x="1597" y="849" style="font-size:8px;font-weight:bold;fill:#333">A</text><text x="1597" y="857" style="font-size:8px;font-weight:bold;fill:#333">Z</text>
<path d="M1607 842v13M1604 851l3 4 3-4" fill="none" stroke="#1d62ac" stroke-width="1.500"/>
<path d="M1619.500 840v20" stroke="#a8b1cc"/>
<path d="M1627 858l1-8a5 5 0 0 1 1-9l1 4h2.500l1-4a5 5 0 0 1-1.500 9l-1 8z" fill="#a9acb8"/>
<path d="M1567 927.500h346" stroke="#e6e7ee"/>
<text x="1599" y="965" style="font-size:19px;fill:#c4c6cc" textLength="156" lengthAdjust="spacingAndGlyphs">Activate Windows</text>
<text x="1599" y="986" style="font-size:14px;fill:#c4c6cc" textLength="235" lengthAdjust="spacingAndGlyphs">Go to Settings to activate Windows.</text>
<rect x="1567" y="990" width="103" height="19" fill="#3b4f81"/>
<text x="1572" y="1004" class="lb" textLength="93" lengthAdjust="spacingAndGlyphs">Pending Changes</text>
<rect x="1672" y="990" width="62" height="20" fill="#fdfdff"/>
<text x="1677" y="1004" textLength="53" lengthAdjust="spacingAndGlyphs">Properties</text>

<!-- status bar -->
<rect x="0" y="1017" width="1920" height="23" fill="#a34b40"/>
<rect x="0" y="1040" width="1920" height="4" fill="#1f2e2e"/>
<path d="M7.500 1034.500l2.500-11h9l-2.500 11z" fill="none" stroke="#fff"/>
<text x="28.500" y="1033" class="w" textLength="32" lengthAdjust="spacingAndGlyphs">Ready</text>
<path d="M1636 1036l1-4 6-8 3 2-6 8z" fill="#fff" stroke="#222" stroke-width=".7"/>
<text x="1655" y="1033" class="w">4</text>
<circle cx="1688" cy="1024" r="2.500" fill="none" stroke="#fff"/><circle cx="1688" cy="1036" r="2.500" fill="none" stroke="#fff"/><circle cx="1695" cy="1025" r="2.500" fill="none" stroke="#fff"/><path d="M1688 1026.500v7M1695 1027.500c0 3-7 2-7 5" fill="none" stroke="#fff"/>
<text x="1705" y="1033" class="w" textLength="111" lengthAdjust="spacingAndGlyphs">NMP3000MobileWeb</text>
<path d="M1823 1031h8l-4-4z" fill="#fff"/>
<ellipse cx="1866" cy="1029" rx="5" ry="6" fill="#f49a18"/>
<path d="M1883 1033h3v-6a3 3 0 0 1 6 0v6h1M1883 1035h10" fill="none" stroke="#fff"/>
<circle cx="1895" cy="1035" r="5.500" fill="#fff"/><text x="1892.500" y="1039" style="font-size:10px;font-weight:bold;fill:#222">1</text>
<!-- I-beam cursor -->
<path d="M689 671h5M689 686h5M691.500 671v15" stroke="#222" fill="none"/>
</svg>
</body></html>
